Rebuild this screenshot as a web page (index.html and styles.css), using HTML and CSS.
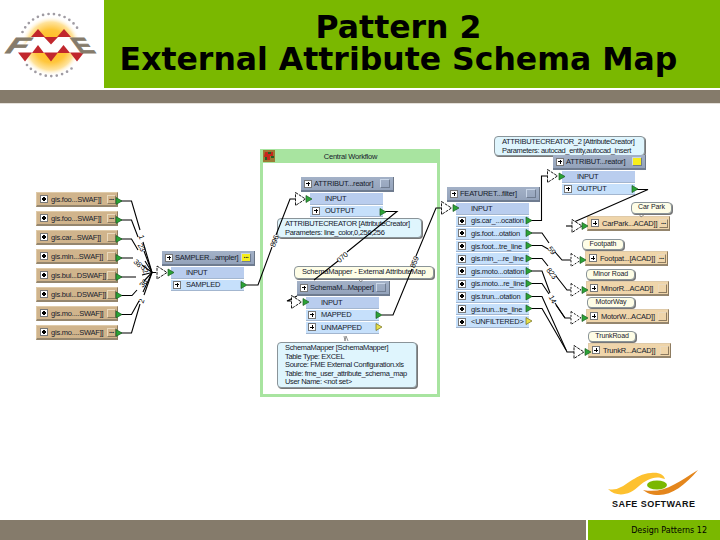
FILE: index.html
```html
<!DOCTYPE html>
<html lang="en">
<head>
    <meta charset="UTF-8">
    <title>Pattern 2 - External Attribute Schema Map</title>
    <link rel="stylesheet" href="styles.css">
</head>
<body>
<div class="slide">
    <header class="header">
        <div class="logo">
            <svg width="104" height="88" viewBox="0 0 104 88">
                <defs>
                    <radialGradient id="sun">
                        <stop offset="0" stop-color="#ffb914"/>
                        <stop offset="0.55" stop-color="#ffc63c"/>
                        <stop offset="0.8" stop-color="#ffe39c"/>
                        <stop offset="1" stop-color="#fff" stop-opacity="0"/>
                    </radialGradient>
                </defs>
                <circle cx="51" cy="46" r="30" fill="url(#sun)"/>
                <path class="dots" d="M22.500 32A31.500 31.500 0 0 1 79.500 32M27 65A31.500 31.500 0 0 0 75 65"/>
                <path fill="#fff" d="M31 37H71L84 53H18Z"/>
                <path fill="#c1272d" d="M38 29L45 37H31ZM64 29L71 37H57ZM44 37H58L51 44.500ZM38 45L44 53H32ZM63.500 45L70 53H57ZM18 52.500H32L25 61.500ZM44 52.500H58L51 61.500ZM70 52.500H84L77 61.500Z"/>
                <text class="logo-letter" transform="translate(3 53) skewX(-36) scale(1.5 1)">F</text>
                <text class="logo-letter" transform="translate(79.500 53) skewX(36) scale(1.180 1)">E</text>
            </svg>
        </div>
        <h1 class="title">Pattern 2<br>External Attribute Schema Map</h1>
    </header>
    <div class="rule"></div>

    <main class="canvas">
        <!-- source readers -->
        <div class="readers">
            <div class="feature"><i class="dot"></i><span>gis.foo...SWAF]]</span><b>...</b></div>
            <div class="feature"><i class="dot"></i><span>gis.foo...SWAF]]</span><b>...</b></div>
            <div class="feature"><i class="dot"></i><span>gis.car...SWAF]]</span><b></b></div>
            <div class="feature"><i class="dot"></i><span>gis.min...SWAF]]</span><b></b></div>
            <div class="feature"><i class="dot"></i><span>gis.bui...DSWAF]]</span><b></b></div>
            <div class="feature"><i class="dot"></i><span>gis.bui...DSWAF]]</span><b></b></div>
            <div class="feature"><i class="dot"></i><span>gis.mo....SWAF]]</span><b></b></div>
            <div class="feature"><i class="dot"></i><span>gis.mo....SWAF]]</span><b>...</b></div>
        </div>

        <div class="bookmark">
            <div class="bookmark-title">
                <svg width="12" height="12" viewBox="0 0 12 12"><path fill="#9c7a35" d="M0 0H12V12H0Z"/><path fill="#c7251c" d="M2 2H10V6H7V10H4V7H1Z"/><path fill="#275e25" d="M5 2H8V4H5ZM2 7H4V10H2ZM8 6H11V8H8Z"/></svg>
                <span>Central Workflow</span>
            </div>
        </div>

        <div class="node sampler">
            <div class="node-head"><i class="plus"></i><span>SAMPLER...ampler]</span><b class="yellow">...</b></div>
            <div class="port in"><span>INPUT</span></div>
            <div class="port"><i class="plus"></i><span>SAMPLED</span></div>
        </div>

        <div class="note blue creator-note">ATTRIBUTECREATOR [AttributeCreator]<br>Parameters: line_color,0,256,256</div>
        <div class="node creator">
            <div class="node-head"><i class="plus"></i><span>ATTRIBUT...reator]</span><b></b></div>
            <div class="port in"><span>INPUT</span></div>
            <div class="port"><i class="plus"></i><span>OUTPUT</span></div>
        </div>

        <div class="note cream mapper-title">SchemaMapper - External AttributeMap</div>
        <div class="node mapper">
            <div class="node-head"><i class="plus"></i><span>SchemaM...Mapper]</span><b></b></div>
            <div class="port in"><span>INPUT</span></div>
            <div class="port"><i class="plus"></i><span>MAPPED</span></div>
            <div class="port"><i class="plus"></i><span>UNMAPPED</span></div>
        </div>
        <div class="note blue mapper-note">SchemaMapper [SchemaMapper]<br>Table Type: EXCEL<br>Source: FME External Configuration.xls<br>Table: fme_user_attribute_schema_map<br>User Name: &lt;not set&gt;</div>

        <div class="node filter">
            <div class="node-head"><i class="plus"></i><span>FEATURET...filter]</span><b></b></div>
            <div class="port in"><span>INPUT</span></div>
            <div class="port"><i class="dot"></i><span>gis.car_...ocation</span></div>
            <div class="port"><i class="dot"></i><span>gis.foot...otation</span></div>
            <div class="port"><i class="dot"></i><span>gis.foot...tre_line</span></div>
            <div class="port"><i class="dot"></i><span>gis.min_...re_line</span></div>
            <div class="port"><i class="dot"></i><span>gis.moto...otation</span></div>
            <div class="port"><i class="dot"></i><span>gis.moto...re_line</span></div>
            <div class="port"><i class="dot"></i><span>gis.trun...otation</span></div>
            <div class="port"><i class="dot"></i><span>gis.trun...tre_line</span></div>
            <div class="port"><i class="dot"></i><span>&lt;UNFILTERED&gt;</span></div>
        </div>

        <div class="note blue creator2-note">ATTRIBUTECREATOR_2 [AttributeCreator]<br>Parameters: autocad_entity,autocad_insert</div>
        <div class="node creator2">
            <div class="node-head"><i class="plus"></i><span>ATTRIBUT...reator]</span><b class="yellow"></b></div>
            <div class="port in"><span>INPUT</span></div>
            <div class="port"><i class="plus"></i><span>OUTPUT</span></div>
        </div>

        <!-- destination writers -->
        <div class="feature writer carpark"><i class="plus"></i><span>CarPark...ACAD]]</span><b>...</b></div>
        <div class="feature writer footpath"><i class="plus"></i><span>Footpat...[ACAD]]</span><b>...</b></div>
        <div class="feature writer minor"><i class="plus"></i><span>MinorR...ACAD]]</span><b></b></div>
        <div class="feature writer motor"><i class="plus"></i><span>MotorW...ACAD]]</span><b></b></div>
        <div class="feature writer trunk"><i class="plus"></i><span>TrunkR...ACAD]]</span><b></b></div>
        <div class="note cream tag carpark-tag">Car Park</div>
        <div class="note cream tag footpath-tag">Footpath</div>
        <div class="note cream tag minor-tag">Minor Road</div>
        <div class="note cream tag motor-tag">MotorWay</div>
        <div class="note cream tag trunk-tag">TrunkRoad</div>

        <!-- connections, drawn in slide coordinates -->
        <svg class="wires" width="720" height="416" viewBox="0 104 720 416">
            <defs>
                <path id="out" d="M-3 -3.500L3 0L-3 3.500Z"/>
                <path id="entry" d="M0 -6.500L10 0L0 6.500Z"/>
            </defs>
            <g class="line">
                <path d="M120 201H131.500L140 230M143 242L152 272.500"/>
                <path d="M120 220H131.500L138 237M144 251L152 272.500"/>
                <path d="M120 239H131.500L138 250M145 261L152 272.500"/>
                <path d="M120 258H133M142 265L152 272.500H156"/>
                <path d="M120 277H136M142 275L152 272.500"/>
                <path d="M120 295.500H132L137 290M144 281L152 272.500"/>
                <path d="M120 314.500H131.500L139 301M143 292L152 272.500"/>
                <path d="M120 333H131.500L140 304M144 295L152 272.500"/>
                <path d="M247 285H258L272 247M276 235L290 199H295"/>
                <path d="M385 211.500H397L347 252M338 261L314 280"/>
                <path d="M297 296L287 301H291"/>
                <path d="M382 315H393L412 269M416 256L436 208H441"/>
                <path d="M531 220.500H541.500V176H547"/>
                <path d="M636 189.500H648L574 222"/>
                <path d="M566 226H572"/>
                <path d="M531 233H542L549 243M555 252L562 260H571"/>
                <path d="M531 245.500H542L548 249"/>
                <path d="M531 258.500H542L548 266M556 276L567 290H572"/>
                <path d="M531 271H542L550 293M555 303L565 318H571"/>
                <path d="M531 283.500H542L549 294M556 305L565 318"/>
                <path d="M531 296.500H542L567 352H574"/>
                <path d="M531 308.500H542L566 350"/>
            </g>
            <g class="entry">
                <use href="#entry" x="157" y="272.500"/>
                <use href="#entry" x="295.500" y="199"/>
                <use href="#entry" x="291.500" y="302"/>
                <use href="#entry" x="441.500" y="208"/>
                <use href="#entry" x="547.500" y="176"/>
                <use href="#entry" x="572" y="226"/>
                <use href="#entry" class="dashed" x="571" y="260"/>
                <use href="#entry" class="dashed" x="571" y="290"/>
                <use href="#entry" class="dashed" x="571" y="318"/>
                <use href="#entry" x="574" y="352"/>
            </g>
            <g class="ports">
                <use href="#out" x="119" y="201"/>
                <use href="#out" x="119" y="220"/>
                <use href="#out" x="119" y="239"/>
                <use href="#out" x="119" y="258"/>
                <use href="#out" x="119" y="277"/>
                <use href="#out" x="119" y="295.500"/>
                <use href="#out" x="119" y="314.500"/>
                <use href="#out" x="119" y="333"/>
                <use href="#out" x="171" y="272.500"/>
                <use href="#out" x="244" y="285"/>
                <use href="#out" x="309" y="199"/>
                <use href="#out" x="383" y="212"/>
                <use href="#out" x="306" y="302"/>
                <use href="#out" x="379" y="315"/>
                <use href="#out" class="unused" x="379" y="327"/>
                <use href="#out" x="456" y="208"/>
                <use href="#out" x="529" y="220.500"/>
                <use href="#out" x="529" y="233"/>
                <use href="#out" x="529" y="245.500"/>
                <use href="#out" x="529" y="258.500"/>
                <use href="#out" x="529" y="271"/>
                <use href="#out" x="529" y="283.500"/>
                <use href="#out" x="529" y="296.500"/>
                <use href="#out" x="529" y="308.500"/>
                <use href="#out" class="unused" x="529" y="321"/>
                <use href="#out" x="562" y="176.500"/>
                <use href="#out" x="635" y="189"/>
                <use href="#out" x="585" y="226"/>
                <use href="#out" x="583" y="260"/>
                <use href="#out" x="585" y="290"/>
                <use href="#out" x="585" y="318"/>
                <use href="#out" x="588" y="352"/>
            </g>
            <path class="pointer" d="M344 336L345 341L346 336L348 341M358 279L361 282L363 279M639 214L641 217L645 214"/>
            <g class="count">
                <text transform="translate(274 241) rotate(-70)" y="3">896</text>
                <text transform="translate(342 257) rotate(-42)" y="3">070</text>
                <text transform="translate(414 262) rotate(-68)" y="3">859</text>
                <text transform="translate(552 250) rotate(50)" y="3">59</text>
                <text transform="translate(552 273) rotate(52)" y="3">823</text>
                <text transform="translate(553 299) rotate(62)" y="3">14</text>
                <text transform="translate(142 237) rotate(72)" y="3">1</text>
                <text transform="translate(142 247) rotate(62)" y="3">23</text>
                <text transform="translate(138 263) rotate(45)" y="3">38</text>
                <text transform="translate(145 269) rotate(65)" y="3">52</text>
                <text transform="translate(143 283) rotate(-50)" y="3">36</text>
                <text transform="translate(141 301) rotate(-72)" y="3">2</text>
            </g>
        </svg>

        <div class="brand">
            <svg width="92" height="30" viewBox="0 0 92 30">
                <path fill="#fdc130" d="M0 19C15 23 24 4 43 3C51 2 56 5 57 9C47 5 39 9 31 16C22 25 9 28 0 19Z"/>
                <path fill="#e4861c" d="M35 20C56 24 69 13 90 0C77 15 64 25 51 25C43 25 39 23 35 20Z"/>
                <ellipse cx="49" cy="15" rx="10" ry="4.500" fill="#7ab800"/>
            </svg>
            <div class="brand-name">SAFE SOFTWARE</div>
        </div>
    </main>

    <footer class="footer">
        <div class="footer-bar"></div>
        <div class="footer-page">Design Patterns 12</div>
    </footer>
</div>
</body>
</html>
```
FILE: styles.css
```css
body {
    margin: 0;
    background: #fff;
    font-family: "Liberation Sans", Arial, sans-serif;
}
.slide {
    display: flex;
    flex-direction: column;
    width: 720px;
    height: 540px;
    overflow: hidden;
}

/* header */
.header {
    display: flex;
    height: 88px;
}
.logo {
    width: 104px;
}
.logo svg {
    display: block;
}
.dots {
    fill: none;
    stroke: #a09ca3;
    stroke-width: 2.7;
    stroke-linecap: round;
    stroke-dasharray: 0 5.5;
}
.logo-letter {
    font-size: 22px;
    font-weight: bold;
    fill: #857b6b;
    stroke: #857b6b;
    stroke-width: 0.8;
}
.title {
    flex: 1;
    box-sizing: border-box;
    margin: 0;
    padding: 11px 27px 0 0;
    background: #7ab800;
    color: #000;
    font: bold 31.5px/32px "DejaVu Sans", Verdana, sans-serif;
    text-align: center;
    white-space: nowrap;
}
.rule {
    height: 13px;
    margin-top: 2px;
    background: #857b6b;
    border-bottom: 1px solid #e4e0da;
}

/* workspace */
.canvas {
    position: relative;
    flex: 1;
    font-size: 7.5px;
    letter-spacing: -0.22px;
    color: #16202c;
}
.readers {
    position: absolute;
    left: 36px;
    top: 88px;
    width: 82px;
    display: flex;
    flex-direction: column;
    gap: 4px;
}
.feature {
    display: flex;
    align-items: center;
    gap: 3px;
    box-sizing: border-box;
    height: 15px;
    padding: 0 1px 0 3px;
    background: #d0b48c;
    border: 1px solid #dfcaa8;
    border-right-color: #8d7b60;
    border-bottom: 2px solid #95866e;
    white-space: nowrap;
}
.feature span, .node-head span {
    flex: 1;
}
.feature span {
    width: 0;
}
.feature b, .node-head b {
    flex: none;
    box-sizing: border-box;
    width: 9px;
    height: 9px;
    border: 1px solid;
    border-color: #ead9bd #8d7b60 #8d7b60 #ead9bd;
    font-size: 7px;
    line-height: 4px;
    text-align: center;
}
.plus, .dot {
    flex: none;
    box-sizing: border-box;
    width: 8px;
    height: 8px;
    border: 1px solid #777;
    background: #fff;
}
.plus {
    background: linear-gradient(#000, #000) center / 4px 1px no-repeat, linear-gradient(#000, #000) center / 1px 4px no-repeat, #fff;
}
.dot {
    background: radial-gradient(circle, #000 1.6px, #fff 2px);
}
.writer {
    position: absolute;
    width: 83px;
    background: #efd5aa;
}

.bookmark {
    position: absolute;
    left: 260px;
    top: 45px;
    box-sizing: border-box;
    width: 180px;
    height: 248px;
    border: 3px solid #a8e4a0;
    border-top: 0;
}
.bookmark-title {
    display: flex;
    align-items: center;
    height: 14px;
    background: #a8e4a0;
}
.bookmark-title span {
    flex: 1;
    padding-right: 11px;
    text-align: center;
}

.node {
    position: absolute;
    width: 93px;
}
.node-head {
    display: flex;
    align-items: center;
    gap: 2px;
    box-sizing: border-box;
    height: 15px;
    padding: 0 3px 0 3px;
    background: linear-gradient(#a3b1c7, #94a3bb);
    border-right: 1px solid #6b7686;
    border-bottom: 2px solid #6f7c90;
    white-space: nowrap;
}
.node-head span {
    width: 0;
}
.node-head b {
    width: 10px;
    border-color: #c9d6e8 #6f7c90 #6f7c90 #c9d6e8;
}
.node-head .yellow {
    background: #f6ee1c;
}
.port {
    display: flex;
    align-items: center;
    gap: 5px;
    box-sizing: border-box;
    width: 73px;
    height: 11.6px;
    margin: 1px 0 0 9px;
    padding-left: 2px;
    background: #c6e0fb;
    border-bottom: 1px solid #a3b6cf;
    white-space: nowrap;
}
.in {
    padding-left: 15px;
    background: #b9cdee;
}
.note {
    position: absolute;
    box-sizing: border-box;
    padding: 1px 7px;
    border: 1px solid #8a9499;
    border-radius: 4px;
    box-shadow: 1px 1px 0 #777;
    line-height: 8.6px;
    letter-spacing: -0.33px;
    white-space: nowrap;
}
.blue {
    background: #dff5fd;
}
.cream {
    background: #fefde6;
}
.tag {
    height: 11px;
    padding: 0;
    font-size: 7px;
    letter-spacing: -0.1px;
    text-align: center;
}

/* node places on the workspace */
.sampler { left: 162px; top: 147px; }
.creator { left: 301px; top: 73px; }
.mapper { left: 297px; top: 177px; }
.filter { left: 447px; top: 83px; }
.creator2 { left: 553px; top: 51px; }
.creator-note { left: 277px; top: 114px; width: 145px; height: 20px; }
.mapper-title { left: 294px; top: 162px; width: 140px; height: 13px; letter-spacing: -0.22px; }
.mapper-note { left: 277px; top: 238px; width: 140px; height: 46px; }
.creator2-note { left: 494px; top: 32px; width: 151px; height: 20px; }
.carpark { left: 587px; top: 112px; }
.footpath { left: 585px; top: 147px; }
.minor { left: 586px; top: 177px; }
.motor { left: 586px; top: 205px; }
.trunk { left: 588px; top: 239px; }
.carpark-tag { left: 631px; top: 98px; width: 41px; height: 12px; }
.footpath-tag { left: 582px; top: 135px; width: 42px; }
.minor-tag { left: 586px; top: 165px; width: 49px; }
.motor-tag { left: 587px; top: 193px; width: 48px; }
.trunk-tag { left: 588px; top: 227px; width: 48px; }

.wires {
    position: absolute;
    left: 0;
    top: 0;
}
.line path, .entry use {
    fill: none;
    stroke: #000;
    stroke-width: 1.1;
}
.entry use {
    fill: #fff;
    stroke-width: 0.9;
    stroke-dasharray: 3 1;
}
.entry .dashed {
    stroke-dasharray: 2 1.5;
}
.ports use {
    fill: #2ba336;
    stroke: #1c5a22;
    stroke-width: 0.7;
}
.ports .unused {
    fill: #e8e04a;
    stroke: #6e6a1c;
}
.pointer {
    fill: none;
    stroke: #777;
    stroke-width: 0.8;
}
.count text {
    font-size: 7.5px;
    text-anchor: middle;
    fill: #000;
}

.brand {
    position: absolute;
    left: 608px;
    top: 366px;
    width: 92px;
}
.brand svg {
    display: block;
}
.brand-name {
    margin-left: 4px;
    color: #111;
    font-size: 9px;
    font-weight: bold;
    line-height: 9px;
    letter-spacing: 0.45px;
    white-space: nowrap;
}

/* footer */
.footer {
    display: flex;
    gap: 2px;
    height: 20px;
}
.footer-bar {
    width: 586px;
    background: #857b6b;
}
.footer-page {
    flex: 1;
    padding-right: 13px;
    background: #7ab800;
    color: #000;
    font: 8px/22px "DejaVu Sans", Verdana, sans-serif;
    text-align: right;
    white-space: nowrap;
}
```
